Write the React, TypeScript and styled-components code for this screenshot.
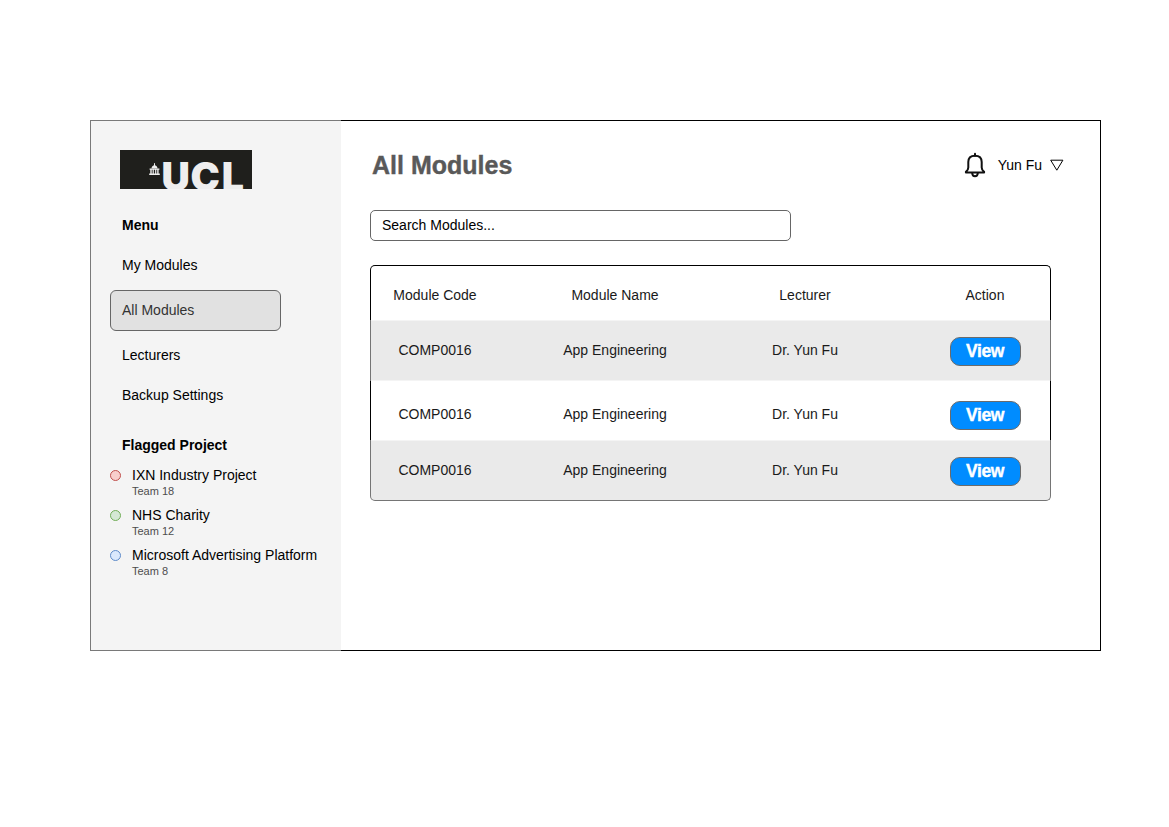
import React from 'react';
import styled, { createGlobalStyle } from 'styled-components';

const GlobalStyle = createGlobalStyle`
  *, *::before, *::after { box-sizing: border-box; }
  body {
    margin: 0;
    background: #fff;
    color: #000;
    font-family: "Liberation Sans", Arial, Helvetica, sans-serif;
    font-size: 14px;
    line-height: 20px;
  }
  h1, h2, p, ul { margin: 0; padding: 0; }
  ul { list-style: none; }
`;

const Page = styled.div`
  display: flex;
  padding: 120px 0 0 90px;
`;

const Window = styled.div`
  display: flex;
  width: 1011px;
  height: 531px;
`;

const Sidebar = styled.aside`
  width: 251px;
  padding: 29px 19px 0;
  background: #f4f4f4;
  border: 1px solid #797979;
  border-right: none;
`;

const Main = styled.main`
  flex: 1;
  padding: 29px 49px 0 29px;
  border: 1px solid #000;
  border-left: none;
`;

const Logo = styled.svg`
  display: block;
  margin-left: 10px;
`;

const SectionTitle = styled.h2<{ $top: number }>`
  margin-top: ${(p) => p.$top}px;
  padding-left: 12px;
  font-size: 14px;
  font-weight: 700;
  line-height: 20px;
`;

const Menu = styled.ul`
  display: flex;
  flex-direction: column;
  gap: 20px;
  padding-top: 20px;
`;

const MenuItem = styled.li<{ $active?: boolean }>`
  width: 171px;
  padding-left: 12px;
  ${(p) =>
    p.$active
      ? `
    height: 41px;
    margin: -5px 0 -6px;
    padding: 9px 11px;
    border: 1px solid #666;
    border-radius: 6px;
    background: #e1e1e1;
    color: #333;
  `
      : ''}
`;

const Projects = styled.ul`
  display: flex;
  flex-direction: column;
  gap: 8px;
  padding-top: 10px;
`;

const Project = styled.li`
  display: flex;
  align-items: flex-start;
  gap: 11px;
  height: 32px;
  white-space: nowrap;
`;

const Dot = styled.span<{ $fill: string; $line: string }>`
  flex: none;
  width: 11px;
  height: 11px;
  margin-top: 5px;
  border: 1px solid ${(p) => p.$line};
  border-radius: 50%;
  background: ${(p) => p.$fill};
`;

const Team = styled.p`
  color: #4d4d4d;
  font-size: 11px;
  line-height: 12px;
`;

const Header = styled.header`
  display: flex;
  align-items: center;
  justify-content: space-between;
  height: 30px;
`;

const PageTitle = styled.h1`
  padding-left: 2px;
  color: #595959;
  font-size: 25px;
  line-height: 30px;
  -webkit-text-stroke: 0.4px #595959;
`;

const User = styled.div`
  display: flex;
  align-items: center;
  margin-right: -13px;
`;

const UserName = styled.span`
  margin: 0 8px 0 12px;
`;

const Search = styled.div`
  width: 421px;
  height: 31px;
  margin-top: 30px;
  padding-left: 11px;
  border: 1px solid #666;
  border-radius: 5px;
  line-height: 29px;
`;

const Table = styled.div`
  display: flex;
  flex-direction: column;
  width: 681px;
  margin-top: 24px;
  color: #1a1a1a;
`;

const rowShapes = {
  head: { height: 55, padding: '4px 5px 0 4px' },
  plain: { height: 59, padding: '7px 5px 0 4px' },
  shaded: { height: 61, padding: '0 5px 1px 4px' },
};

const Row = styled.div<{ $kind: keyof typeof rowShapes; $last?: boolean }>`
  display: grid;
  grid-template-columns: 120px 240px 140px 1fr;
  align-items: center;
  height: ${(p) => rowShapes[p.$kind].height}px;
  padding: ${(p) => rowShapes[p.$kind].padding};
  background: ${(p) => (p.$kind === 'shaded' ? '#eaeaea' : '#fff')};
  border: 0 solid ${(p) => (p.$kind === 'shaded' ? '#757575' : '#000')};
  border-left-width: 1px;
  border-right-width: 1px;
  ${(p) => (p.$kind === 'head' ? 'border-top-width: 1px; border-radius: 5px 5px 0 0;' : '')}
  ${(p) =>
    p.$kind === 'shaded'
      ? `box-shadow: inset 0 1px #f4f4f4${p.$last ? '' : ', inset 0 -1px #f4f4f4'};`
      : ''}
  ${(p) =>
    p.$last ? 'padding-bottom: 0; border-bottom-width: 1px; border-radius: 0 0 5px 5px;' : ''}
`;

const Cell = styled.span`
  text-align: center;
`;

const ActionCell = styled(Cell)`
  display: flex;
  justify-content: center;
  justify-self: end;
  width: 120px;
`;

const ViewButton = styled.button`
  width: 71px;
  height: 29px;
  margin-top: 3px;
  padding: 1px 0;
  border: 1px solid #6b6b6b;
  border-radius: 10px;
  background: #008cff;
  color: #fff;
  font: 700 17.5px/25px "Liberation Sans", Arial, sans-serif;
  letter-spacing: -0.35px;
  -webkit-text-stroke: 0.4px #fff;
`;

function UclLogo() {
  return (
    <Logo width="132" height="39" viewBox="0 0 132 39">
      <rect width="132" height="39" fill="#1f1f1c" />
      <g fill="#eee">
        <rect x="34" y="13.2" width="1" height="3" />
        <path d="M31.4 18.6 Q31.8 15.4 34.5 15.2 Q37.2 15.4 37.6 18.6Z" />
        <path d="M29.6 18.4h9.8v1.4h-9.8zM30.3 19.8h1.4v4h-1.4zM32.6 19.8h1.2v4h-1.2zM35.1 19.8h1.2v4h-1.2zM37.2 19.8h1.4v4h-1.4zM29.2 23.6h10.6v1.4H29.2z" />
      </g>
      <text
        x="41.4 70.6 101.8"
        y="41.2"
        fill="#eee"
        fontFamily="Inter, sans-serif"
        fontWeight="900"
        fontSize="39.3"
      >
        UCL
      </text>
    </Logo>
  );
}

function Bell() {
  return (
    <svg width="22" height="26" viewBox="0 0 22 26" fill="none" stroke="#111" strokeWidth="2">
      <path d="M11 1.7v2" strokeLinecap="round" />
      <path d="M11 3.7c-4.4 0-6.7 2.6-6.7 6.4v5.3c0 2-.9 3.3-2.4 4.5v.6h18.2v-.6c-1.5-1.2-2.4-2.5-2.4-4.5v-5.3c0-3.8-2.3-6.4-6.7-6.4z" strokeLinejoin="round" />
      <path d="M8.2 21c.1 2.2 1.2 3.3 2.8 3.3s2.7-1.1 2.8-3.3" />
    </svg>
  );
}

function Caret() {
  return (
    <svg width="14" height="12" viewBox="0 0 14 12" fill="none" stroke="#000">
      <path d="M.7 1.2h12.2L6.8 11.2z" />
    </svg>
  );
}

const menu = ['My Modules', 'All Modules', 'Lecturers', 'Backup Settings'];

const projects = [
  { name: 'IXN Industry Project', team: 'Team 18', fill: '#f8cecc', line: '#c0504d' },
  { name: 'NHS Charity', team: 'Team 12', fill: '#d5e8d4', line: '#72ad58' },
  { name: 'Microsoft Advertising Platform', team: 'Team 8', fill: '#dae8fc', line: '#5f8bc9' },
];

const modules = [
  { code: 'COMP0016', name: 'App Engineering', lecturer: 'Dr. Yun Fu' },
  { code: 'COMP0016', name: 'App Engineering', lecturer: 'Dr. Yun Fu' },
  { code: 'COMP0016', name: 'App Engineering', lecturer: 'Dr. Yun Fu' },
];

export default function App() {
  return (
    <Page>
      <GlobalStyle />
      <Window>
        <Sidebar>
          <UclLogo />
          <SectionTitle $top={26}>Menu</SectionTitle>
          <Menu>
            {menu.map((item) => (
              <MenuItem key={item} $active={item === 'All Modules'}>
                {item}
              </MenuItem>
            ))}
          </Menu>
          <SectionTitle $top={30}>Flagged Project</SectionTitle>
          <Projects>
            {projects.map((p) => (
              <Project key={p.name}>
                <Dot $fill={p.fill} $line={p.line} />
                <div>
                  <p>{p.name}</p>
                  <Team>{p.team}</Team>
                </div>
              </Project>
            ))}
          </Projects>
        </Sidebar>
        <Main>
          <Header>
            <PageTitle>All Modules</PageTitle>
            <User>
              <Bell />
              <UserName>Yun Fu</UserName>
              <Caret />
            </User>
          </Header>
          <Search>Search Modules...</Search>
          <Table>
            <Row $kind="head">
              <Cell>Module Code</Cell>
              <Cell>Module Name</Cell>
              <Cell>Lecturer</Cell>
              <ActionCell>Action</ActionCell>
            </Row>
            {modules.map((m, i) => (
              <Row key={i} $kind={i % 2 ? 'plain' : 'shaded'} $last={i === modules.length - 1}>
                <Cell>{m.code}</Cell>
                <Cell>{m.name}</Cell>
                <Cell>{m.lecturer}</Cell>
                <ActionCell>
                  <ViewButton>View</ViewButton>
                </ActionCell>
              </Row>
            ))}
          </Table>
        </Main>
      </Window>
    </Page>
  );
}
